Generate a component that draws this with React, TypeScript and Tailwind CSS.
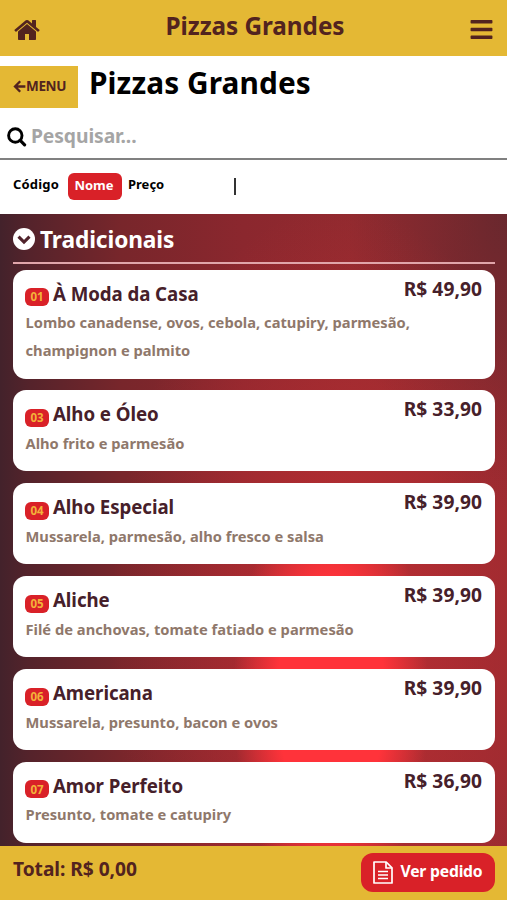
import { FaBars } from "react-icons/fa";

type Pizza = { code: string; name: string; description: string; price: string };

const pizzas: Pizza[] = [
  { code: "01", name: "À Moda da Casa", description: "Lombo canadense, ovos, cebola, catupiry, parmesão, champignon e palmito", price: "R$ 49,90" },
  { code: "03", name: "Alho e Óleo", description: "Alho frito e parmesão", price: "R$ 33,90" },
  { code: "04", name: "Alho Especial", description: "Mussarela, parmesão, alho fresco e salsa", price: "R$ 39,90" },
  { code: "05", name: "Aliche", description: "Filé de anchovas, tomate fatiado e parmesão", price: "R$ 39,90" },
  { code: "06", name: "Americana", description: "Mussarela, presunto, bacon e ovos", price: "R$ 39,90" },
  { code: "07", name: "Amor Perfeito", description: "Presunto, tomate e catupiry", price: "R$ 36,90" },
];

function HomeIcon() {
  return (
    <svg className="mt-[4px] -ml-[2px] size-[28px]" viewBox="0 0 1792 1792" fill="currentColor">
      <path d="M1472 992v480q0 26-19 45t-45 19h-384v-384h-256v384h-384q-26 0-45-19t-19-45v-480q0-1 .5-3t.5-3l575-474 575 474q1 2 1 6zm223-69l-62 74q-8 9-21 11h-3q-13 0-21-7l-692-577-692 577q-12 8-24 7-13-2-21-11l-62-74q-8-10-7-23.5t11-21.5l719-599q32-26 76-26t76 26l244 204v-195q0-14 9-23t23-9h192q14 0 23 9t9 23v408l219 182q10 8 11 21.5t-7 23.5z" />
    </svg>
  );
}

function ArrowIcon() {
  return (
    <svg className="size-[13px] shrink-0" viewBox="0 0 13 13" fill="none" stroke="currentColor" strokeWidth="2.3">
      <path d="M7.2 1.2L2 6.5L7.2 11.8M2 6.5H12.4" />
    </svg>
  );
}

function SearchIcon() {
  return (
    <svg className="mt-[9px] size-[20px] text-black" viewBox="0 0 20 20" fill="none" stroke="currentColor" strokeWidth="2.9">
      <circle cx="8.3" cy="8.5" r="6.7" />
      <path d="M13.2 13.4L17.6 17.8" strokeWidth="3.2" strokeLinecap="round" />
    </svg>
  );
}

function ChevronIcon() {
  return (
    <svg className="mt-[3px] size-[22px]" viewBox="0 0 22 22" fill="none">
      <circle cx="11" cy="11" r="11" fill="white" />
      <path d="M5.5 8.7L11 14.1L16.5 8.7" stroke="#50232b" strokeWidth="3.1" />
    </svg>
  );
}

function DocumentIcon() {
  return (
    <svg width="20" height="23" viewBox="0 0 20 23" fill="none" stroke="currentColor" strokeWidth="1.7" strokeLinejoin="round">
      <path d="M1 1H13.2L19 6.8V22H1Z" />
      <path d="M13 1V7H19M5 10.5H15M5 14H15M5 17.5H15" />
    </svg>
  );
}

function PizzaCard({ pizza }: { pizza: Pizza }) {
  return (
    <li className="flex justify-between rounded-[13px] bg-white pr-[12.5px] pl-3">
      <div className="min-w-0 pt-[9px] pb-[13px]">
        <h3 className="flex h-[30px] items-center gap-1 text-[18.7px] leading-[30px] tracking-[-0.07px] whitespace-nowrap text-[#46202a]">
          <span className="mt-[7px] flex h-[18px] w-6 items-center justify-center rounded-md bg-[#d92128] text-[11.5px] leading-none tracking-normal text-[#f3b33a]">
            {pizza.code}
          </span>
          {pizza.name}
        </h3>
        <p className="-mt-[0.5px] mb-[1.5px] w-[410px] pl-[0.5px] text-[14.7px] leading-[28px] tracking-[0.01px] text-[#8f786b]">{pizza.description}</p>
      </div>
      <span className="-ml-14 pt-1 text-[19.2px] leading-[29.5px] tracking-[0.05px] whitespace-nowrap text-[#46202a]">{pizza.price}</span>
    </li>
  );
}

export default function App() {
  return (
    <div className="flex h-[900px] w-[507px] flex-col overflow-hidden bg-white font-['Noto_Sans','Open_Sans',sans-serif] font-bold">
      <header className="flex h-[55.5px] shrink-0 items-center justify-between bg-[#e4b834] pr-[13px] pl-[15px] text-[#52231f]">
        <HomeIcon />
        <span className="mb-[3px] text-[24.3px] leading-8 tracking-[-0.05px]">Pizzas Grandes</span>
        <FaBars className="mt-[3px] size-[25px]" />
      </header>

      <div className="mt-[10px] flex h-[42px] shrink-0">
        <button className="flex w-[78px] items-center bg-[#e4b834] pl-[13px] text-[13.5px] tracking-[-0.35px] text-[#52231f]">
          <ArrowIcon />
          MENU
        </button>
        <h1 className="ml-[11px] text-[29.8px] leading-[34px] tracking-[0.1px] whitespace-nowrap text-black">Pizzas Grandes</h1>
      </div>

      <div className="flex h-[52px] shrink-0 items-center gap-1 border-b-[2.5px] border-[#808080] pl-[7px]">
        <SearchIcon />
        <span className="mt-[7px] text-[19.3px] leading-7 tracking-[-0.1px] text-[#a5a5a5]">Pesquisar...</span>
      </div>

      <nav className="flex h-[54.5px] shrink-0 items-center pl-[13px] text-[13px] text-black">
        <span className="mb-[4px] w-[55px] tracking-[0.2px]">Código</span>
        <span className="mb-px flex h-[27px] w-[54px] items-center justify-center rounded-md bg-[#d92128] pr-[2px] pb-[2px] text-white">Nome</span>
        <span className="mb-[4px] ml-[6px] w-[106px]">Preço</span>
        <span className="h-[17px] w-[1.5px] bg-[#333]" />
      </nav>

      <main className="flex-1 overflow-hidden bg-[radial-gradient(98px_215px_at_331px_485px,#ff333a_0%,#ff333a_55%,rgba(255,51,58,0)_100%),radial-gradient(230px_430px_at_340px_420px,rgba(220,49,53,0.6)_0%,rgba(220,49,53,0)_100%),radial-gradient(160px_300px_at_507px_0px,rgba(74,38,44,0.6)_0%,rgba(74,38,44,0)_100%),linear-gradient(90deg,#43222b_0%,#55232b_6%,#78262b_24%,#8b272e_48%,#922a2f_70%,#982a30_100%)] pr-[12.5px] pl-[13px]">
        <h2 className="flex h-[49.5px] items-center gap-[5px] border-b-2 border-[#e0a5aa] text-[22.7px] leading-none tracking-[-0.1px] text-white">
          <ChevronIcon />
          <span className="mt-[5px]">Tradicionais</span>
        </h2>
        <ul className="mt-[6px] flex flex-col gap-[11.9px]">
          {pizzas.map((pizza) => (
            <PizzaCard key={pizza.code} pizza={pizza} />
          ))}
        </ul>
      </main>

      <footer className="flex h-[54px] shrink-0 items-start justify-between bg-[#e4b834] pr-[12px] pl-[13px] text-[#52231f]">
        <span className="mt-2 text-[19.2px] leading-[30px] tracking-[-0.05px]">Total: R$ 0,00</span>
        <button className="mt-[6.5px] flex h-[39px] w-[134px] items-center gap-[8px] rounded-xl bg-[#d92128] pl-[11.5px] text-[15.7px] tracking-[-0.2px] whitespace-nowrap text-white">
          <DocumentIcon />
          Ver pedido
        </button>
      </footer>
    </div>
  );
}
